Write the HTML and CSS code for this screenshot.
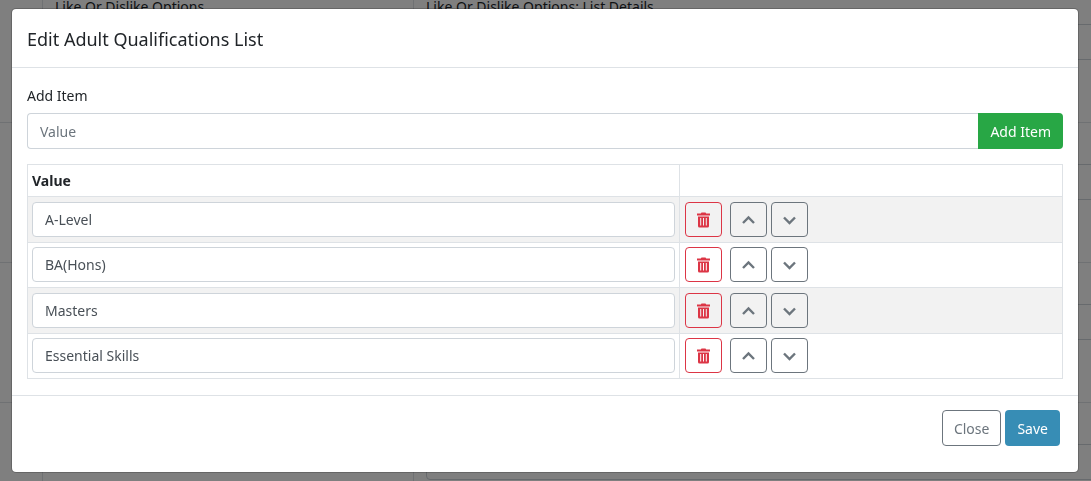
FILE: index.html
```html
<!DOCTYPE html>
<html lang="en">
<head>
    <meta charset="UTF-8">
    <meta name="viewport" content="width=device-width, initial-scale=1.0">
    <title>Edit Adult Qualifications List</title>
    <link rel="stylesheet" href="styles.css">
</head>
<body>
    <svg class="icon-defs" aria-hidden="true">
        <symbol id="icon-trash" viewBox="0 0 13 16">
            <path fill="currentColor" fill-rule="evenodd" d="M0 1.500h3.800l.7-1h4l.7 1H13v2H0zM1 4.500h11v9.500a1.500 1.500 0 0 1-1.500 1.500h-8A1.500 1.500 0 0 1 1 14zM3.200 6v7.500h1V6zM6 6v7.500h1V6zM8.800 6v7.500h1V6z"/>
        </symbol>
        <symbol id="icon-up" viewBox="0 0 13 14">
            <path fill="none" stroke="currentColor" stroke-width="2.400" d="M1 10l5.500-5.500L12 10"/>
        </symbol>
        <symbol id="icon-down" viewBox="0 0 13 14">
            <path fill="none" stroke="currentColor" stroke-width="2.400" d="M1 4.500L6.500 10 12 4.500"/>
        </symbol>
    </svg>

    <div class="page" inert>
        <table class="lists">
            <tr>
                <td class="lists-index"></td>
                <td class="lists-name">Like Or Dislike Options</td>
                <td><label for="list1">Like Or Dislike Options: List Details</label><input type="text" id="list1" class="form-control"></td>
            </tr>
            <tr>
                <td></td>
                <td></td>
                <td><div class="lists-label"></div><input type="text" class="form-control" aria-label="List details"></td>
            </tr>
            <tr>
                <td></td>
                <td></td>
                <td><div class="lists-label"></div><input type="text" class="form-control" aria-label="List details"></td>
            </tr>
            <tr>
                <td></td>
                <td></td>
                <td><div class="lists-label"></div><input type="text" class="form-control" aria-label="List details"></td>
            </tr>
        </table>
    </div>

    <div class="modal">
        <div class="modal-content" role="dialog" aria-labelledby="modalTitle">
            <div class="modal-header">
                <h5 class="modal-title" id="modalTitle">Edit Adult Qualifications List</h5>
            </div>

            <div class="modal-body">
                <label for="newItem">Add Item</label>
                <div class="input-group">
                    <input type="text" id="newItem" class="form-control" placeholder="Value">
                    <button type="button" class="btn btn-success">Add Item</button>
                </div>

                <table class="items">
                    <thead>
                        <tr>
                            <th class="items-value">Value</th>
                            <th></th>
                        </tr>
                    </thead>
                    <tbody>
                        <tr>
                            <td><input type="text" class="form-control" value="A-Level" aria-label="Value"></td>
                            <td>
                                <div class="actions">
                                    <button type="button" class="btn btn-outline-danger" aria-label="Delete"><svg class="icon-trash"><use href="#icon-trash"/></svg></button>
                                    <button type="button" class="btn btn-outline-secondary" aria-label="Move up"><svg><use href="#icon-up"/></svg></button>
                                    <button type="button" class="btn btn-outline-secondary" aria-label="Move down"><svg><use href="#icon-down"/></svg></button>
                                </div>
                            </td>
                        </tr>
                        <tr>
                            <td><input type="text" class="form-control" value="BA(Hons)" aria-label="Value"></td>
                            <td>
                                <div class="actions">
                                    <button type="button" class="btn btn-outline-danger" aria-label="Delete"><svg class="icon-trash"><use href="#icon-trash"/></svg></button>
                                    <button type="button" class="btn btn-outline-secondary" aria-label="Move up"><svg><use href="#icon-up"/></svg></button>
                                    <button type="button" class="btn btn-outline-secondary" aria-label="Move down"><svg><use href="#icon-down"/></svg></button>
                                </div>
                            </td>
                        </tr>
                        <tr>
                            <td><input type="text" class="form-control" value="Masters" aria-label="Value"></td>
                            <td>
                                <div class="actions">
                                    <button type="button" class="btn btn-outline-danger" aria-label="Delete"><svg class="icon-trash"><use href="#icon-trash"/></svg></button>
                                    <button type="button" class="btn btn-outline-secondary" aria-label="Move up"><svg><use href="#icon-up"/></svg></button>
                                    <button type="button" class="btn btn-outline-secondary" aria-label="Move down"><svg><use href="#icon-down"/></svg></button>
                                </div>
                            </td>
                        </tr>
                        <tr>
                            <td><input type="text" class="form-control" value="Essential Skills" aria-label="Value"></td>
                            <td>
                                <div class="actions">
                                    <button type="button" class="btn btn-outline-danger" aria-label="Delete"><svg class="icon-trash"><use href="#icon-trash"/></svg></button>
                                    <button type="button" class="btn btn-outline-secondary" aria-label="Move up"><svg><use href="#icon-up"/></svg></button>
                                    <button type="button" class="btn btn-outline-secondary" aria-label="Move down"><svg><use href="#icon-down"/></svg></button>
                                </div>
                            </td>
                        </tr>
                    </tbody>
                </table>
            </div>

            <div class="modal-footer">
                <button type="button" class="btn btn-outline-secondary">Close</button>
                <button type="button" class="btn btn-primary">Save</button>
            </div>
        </div>
    </div>
</body>
</html>
```

FILE: styles.css
```css
* {
    box-sizing: border-box;
}
body {
    margin: 0;
    font-family: "Segoe UI", "Noto Sans", "Open Sans", sans-serif;
    font-size: 14px;
    line-height: 22px;
    color: #212529;
    background-color: #fff;
    overflow: hidden;
}
.icon-defs {
    display: none;
}
label {
    display: block;
    margin-bottom: 6px;
}

/* page behind the dialog */
.page {
    height: 100vh;
    overflow: hidden;
}
.lists {
    width: 110%;
    margin-top: -18px;
    margin-left: -1px;
    border-collapse: collapse;
    table-layout: fixed;
}
.lists td {
    height: 140px;
    padding: 13px 12px;
    border: 1px solid #dee2e6;
    vertical-align: top;
}
.lists .lists-index {
    width: 43px;
}
.lists .lists-name {
    width: 371px;
}
.lists-label {
    height: 28px;
}

.form-control {
    display: block;
    width: 100%;
    height: 36px;
    padding: 0 12px;
    border: 1px solid #ced4da;
    border-radius: 4px;
    background-color: #fff;
    color: #495057;
    font: inherit;
}
.form-control::placeholder {
    color: #6c757d;
    opacity: 1;
}
.btn {
    height: 36px;
    padding: 1px 11px 0;
    border: 1px solid transparent;
    border-radius: 4px;
    background-color: transparent;
    font: inherit;
    cursor: pointer;
}
.btn svg {
    display: block;
    width: 13px;
    height: 14px;
}
.btn .icon-trash {
    height: 16px;
}
.btn-success {
    background-color: #28a745;
    color: #fff;
}
.btn-primary {
    background-color: #378db5;
    color: #fff;
}
.btn-outline-danger {
    border-color: #dc3545;
    color: #dc3545;
}
.btn-outline-secondary {
    border-color: #6c757d;
    color: #6c757d;
}

.modal {
    position: fixed;
    inset: 0;
    padding: 8px 12px 8px 11px;
    background-color: rgba(0, 0, 0, 0.5);
    overflow: hidden;
}
.modal-content {
    border: 1px solid rgba(0, 0, 0, 0.2);
    border-radius: 5px;
    background-color: #fff;
    background-clip: padding-box;
}
.modal-header {
    padding: 16px 15px 14px;
    border-bottom: 1px solid #dee2e6;
}
.modal-title {
    margin: 0;
    font-size: 18px;
    font-weight: 400;
    line-height: 28px;
}
.modal-body {
    padding: 17px 15px 16px;
}
.input-group {
    display: flex;
    margin-bottom: 15px;
}
.input-group .form-control {
    flex: 1;
    border-right: 0;
    border-radius: 4px 0 0 4px;
}
.input-group .btn {
    border-radius: 0 4px 4px 0;
}

.items {
    width: 100%;
    border-collapse: collapse;
    table-layout: fixed;
}
.items th,
.items td {
    padding: 5px 4px;
    border: 1px solid #dee2e6;
    text-align: left;
}
.items th {
    height: 32px;
    padding: 5px 4px 4px;
}
.items .items-value {
    width: 63%;
}
.items tbody tr:nth-child(odd) {
    background-color: #f2f2f2;
}
.items tbody tr:nth-child(even) td {
    padding-top: 4px;
}
.items .form-control,
.items .btn {
    height: 35px;
}
.actions {
    display: flex;
    gap: 4px;
    padding-left: 1px;
}
.actions .btn-outline-danger {
    margin-right: 4px;
}

.modal-footer {
    display: flex;
    justify-content: flex-end;
    gap: 4px;
    padding: 14px 18px 26px;
    border-top: 1px solid #dee2e6;
}
```
